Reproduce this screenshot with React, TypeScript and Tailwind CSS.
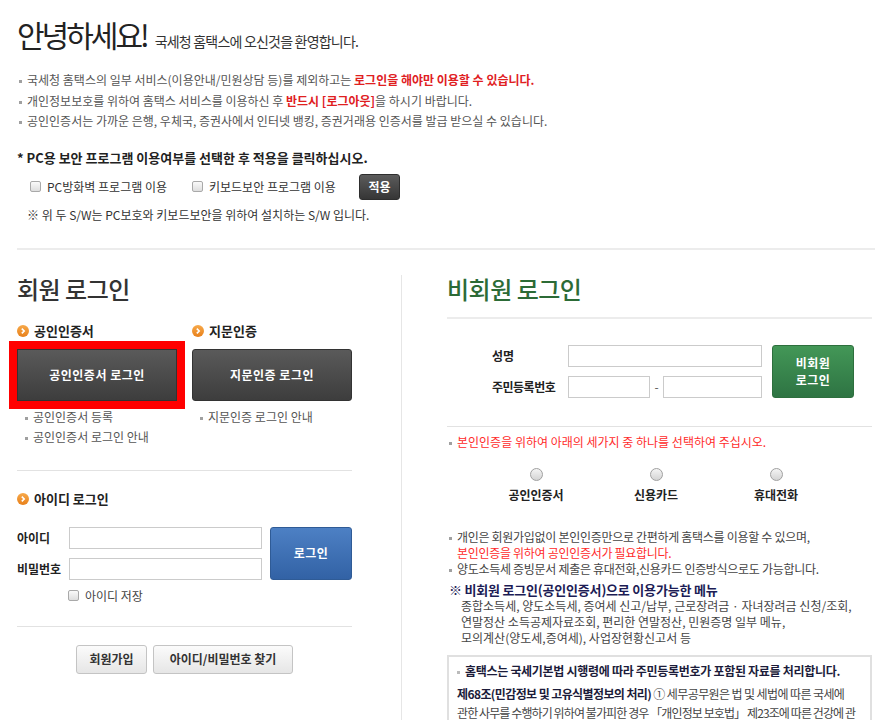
import React from 'react';

const font = { fontFamily: '"Noto Sans CJK KR", "Noto Sans", sans-serif' };

function Dot({ className = '' }: { className?: string }) {
  return <span className={`inline-block w-[3px] h-[3px] bg-[#a0a0a0] align-middle mr-[5px] ${className}`} />;
}

function Check({ className = '' }: { className?: string }) {
  return (
    <span
      className={`inline-block w-[11px] h-[11px] rounded-[2px] border border-[#a9a9a9] bg-gradient-to-b from-[#fafafa] to-[#dedede] ${className}`}
    />
  );
}

function Radio() {
  return (
    <span className="block w-[13px] h-[13px] rounded-full border border-[#a0a0a0] bg-gradient-to-b from-[#f4f4f4] to-[#d4d4d4]" />
  );
}

function OrangeIcon() {
  return (
    <svg width="12" height="12" viewBox="0 0 12 12" className="shrink-0">
      <defs>
        <linearGradient id="og" x1="0" y1="0" x2="0" y2="1">
          <stop offset="0" stopColor="#f7a94a" />
          <stop offset="1" stopColor="#e8801a" />
        </linearGradient>
      </defs>
      <circle cx="6" cy="6" r="6" fill="url(#og)" />
      <path d="M4.8 3.6 L7.2 6 L4.8 8.4" stroke="#fff" strokeWidth="1.6" fill="none" />
    </svg>
  );
}

function SectionHead({ children }: { children: React.ReactNode }) {
  return (
    <div className="flex items-center gap-[5px] h-[16px] text-[13px] font-bold text-[#222]">
      <OrangeIcon />
      <span>{children}</span>
    </div>
  );
}

function Input({ w }: { w: string }) {
  return <div className={`${w} h-[22px] border border-[#cbcbcb] bg-white`} />;
}

export default function App() {
  return (
    <div className="w-[896px] h-[720px] overflow-hidden bg-white text-[#555]" style={font}>
      {/* 상단 안내 */}
      <div className="px-[17px] pt-[16px]">
        <div className="flex items-baseline">
          <h1 className="text-[30px] leading-[36px] tracking-[-3px] text-[#222]">안녕하세요!</h1>
          <span className="ml-[8px] text-[14px] text-[#333] tracking-[-0.8px]">국세청 홈택스에 오신것을 환영합니다.</span>
        </div>
        <ul className="mt-[18px] text-[12px] leading-[20.5px]">
          <li>
            <Dot className="ml-[2px]" />
            국세청 홈택스의 일부 서비스(이용안내/민원상담 등)를 제외하고는{' '}
            <b className="text-[#e0201f]">로그인을 해야만 이용할 수 있습니다.</b>
          </li>
          <li>
            <Dot className="ml-[2px]" />
            개인정보보호를 위하여 홈택스 서비스를 이용하신 후 <b className="text-[#e0201f]">반드시 [로그아웃]</b>을 하시기 바랍니다.
          </li>
          <li>
            <Dot className="ml-[2px]" />
            공인인증서는 가까운 은행, 우체국, 증권사에서 인터넷 뱅킹, 증권거래용 인증서를 발급 받으실 수 있습니다.
          </li>
        </ul>
        <div className="mt-[16px] text-[13px] leading-[20px] font-bold text-[#222]">
          * PC용 보안 프로그램 이용여부를 선택한 후 적용을 클릭하십시오.
        </div>
        <div className="mt-[6px] h-[26px] flex items-center pl-[13px] text-[12px] text-[#333]">
          <label className="w-[162px] flex items-center gap-[6px]">
            <Check />
            PC방화벽 프로그램 이용
          </label>
          <label className="w-[167px] flex items-center gap-[6px]">
            <Check />
            키보드보안 프로그램 이용
          </label>
          <button className="w-[41px] h-[26px] rounded-[3px] border border-[#2e2e2e] bg-gradient-to-b from-[#5c5c5c] to-[#363636] text-white text-[12px] font-bold">
            적용
          </button>
        </div>
        <div className="mt-[5px] pl-[10px] text-[12px] leading-[20px] text-[#333]">
          ※ 위 두 S/W는 PC보호와 키보드보안을 위하여 설치하는 S/W 입니다.
        </div>
        <div className="mt-[23px] w-[858px] h-[2px] bg-[#ececec]" />
      </div>

      {/* 로그인 영역 */}
      <div className="flex pl-[17px] mt-[25px]">
        {/* 회원 로그인 */}
        <div className="w-[385px] h-[450px] border-r border-[#e6e6e6]">
          <h2 className="text-[24px] leading-[28px] font-medium text-[#333] tracking-[-0.5px]">회원 로그인</h2>
          <div className="mt-[20px] flex gap-[15px]">
            <div className="w-[160px]">
              <SectionHead>공인인증서</SectionHead>
              <button className="mt-[10px] w-[160px] h-[52px] border border-[#333] bg-gradient-to-b from-[#5a5a5a] to-[#3d3d3d] text-white text-[12px] font-bold tracking-[0.5px] outline-[8px] outline-solid outline-[#ff0000]">
                공인인증서 로그인
              </button>
            </div>
            <div className="w-[160px]">
              <SectionHead>지문인증</SectionHead>
              <button className="mt-[10px] w-[160px] h-[52px] rounded-[3px] border border-[#333] bg-gradient-to-b from-[#5a5a5a] to-[#3d3d3d] text-white text-[12px] font-bold tracking-[0.5px]">
                지문인증 로그인
              </button>
            </div>
          </div>
          <div className="mt-[6px] flex gap-[15px] text-[12px] leading-[20px] text-[#555]">
            <ul className="w-[160px] pl-[8px]">
              <li><Dot />공인인증서 등록</li>
              <li><Dot />공인인증서 로그인 안내</li>
            </ul>
            <ul className="w-[160px] pl-[8px]">
              <li><Dot />지문인증 로그인 안내</li>
            </ul>
          </div>
          <div className="mt-[23px] w-[335px] h-px bg-[#e2e2e2]" />
          <div className="mt-[20px]">
            <SectionHead>아이디 로그인</SectionHead>
          </div>
          <div className="mt-[20px] flex">
            <div className="flex flex-col gap-[9px]">
              <div className="flex items-center">
                <span className="w-[52px] text-[12px] font-bold text-[#222]">아이디</span>
                <Input w="w-[193px]" />
              </div>
              <div className="flex items-center">
                <span className="w-[52px] text-[12px] font-bold text-[#222]">비밀번호</span>
                <Input w="w-[193px]" />
              </div>
            </div>
            <button className="ml-[8px] w-[82px] h-[53px] rounded-[3px] border border-[#2f5b96] bg-gradient-to-b from-[#4d80c4] to-[#3262a5] text-white text-[12px] font-bold tracking-[0.5px]">
              로그인
            </button>
          </div>
          <label className="mt-[8px] ml-[51px] h-[16px] flex items-center gap-[6px] text-[12px] text-[#444]">
            <Check />
            아이디 저장
          </label>
          <div className="mt-[22px] w-[335px] h-px bg-[#e2e2e2]" />
          <div className="mt-[18px] w-[335px] flex justify-center gap-[6px]">
            <button className="w-[71px] h-[29px] rounded-[3px] border border-[#c4c4c4] bg-gradient-to-b from-[#fbfbfb] to-[#e6e6e6] text-[12px] font-bold text-[#333]">
              회원가입
            </button>
            <button className="w-[140px] h-[29px] rounded-[3px] border border-[#c4c4c4] bg-gradient-to-b from-[#fbfbfb] to-[#e6e6e6] text-[12px] font-bold text-[#333]">
              아이디/비밀번호 찾기
            </button>
          </div>
        </div>

        {/* 비회원 로그인 */}
        <div className="pl-[45px] w-[470px]">
          <h2 className="text-[24px] leading-[28px] font-medium text-[#2c6b36] tracking-[-0.5px]">비회원 로그인</h2>
          <div className="mt-[14px] w-[425px] h-[2px] bg-[#ececec]" />
          <div className="mt-[26px] pl-[45px] flex">
            <div className="flex flex-col gap-[9px]">
              <div className="flex items-center">
                <span className="w-[76px] text-[12px] font-bold text-[#222]">성명</span>
                <Input w="w-[194px]" />
              </div>
              <div className="flex items-center">
                <span className="w-[76px] text-[12px] font-bold text-[#222] tracking-[-0.5px]">주민등록번호</span>
                <Input w="w-[82px]" />
                <span className="w-[13px] text-center text-[12px] text-[#555]">-</span>
                <Input w="w-[99px]" />
              </div>
            </div>
            <button className="ml-[10px] w-[82px] h-[53px] rounded-[3px] border border-[#2d6f3d] bg-gradient-to-b from-[#439757] to-[#2e7443] text-white text-[12px] leading-[17px] font-bold tracking-[0.5px]">
              비회원
              <br />
              로그인
            </button>
          </div>
          <div className="mt-[28px] w-[425px] h-px bg-[#e2e2e2]" />
          <div className="mt-[7px] pl-[2px] text-[12px] leading-[16px] text-[#ff2b2b]">
            <Dot />
            본인인증을 위하여 아래의 세가지 중 하나를 선택하여 주십시오.
          </div>
          <div className="mt-[18px] ml-[29px] flex">
            {['공인인증서', '신용카드', '휴대전화'].map((t) => (
              <div key={t} className="w-[120px] flex flex-col items-center">
                <Radio />
                <span className="mt-[6px] text-[12px] leading-[16px] font-bold text-[#222]">{t}</span>
              </div>
            ))}
          </div>
          <div className="mt-[26px] pl-[2px] text-[12px] leading-[16px] text-[#444] tracking-[-0.3px]">
            <div><Dot />개인은 회원가입없이 본인인증만으로 간편하게 홈택스를 이용할 수 있으며,</div>
            <div className="pl-[8px] text-[#ff2b2b]">본인인증을 위하여 공인인증서가 필요합니다.</div>
            <div><Dot />양도소득세 증빙문서 제출은 휴대전화,신용카드 인증방식으로도 가능합니다.</div>
          </div>
          <div className="mt-[5px] pl-[2px] text-[13px] leading-[16px] font-bold text-[#1c1c55] tracking-[-0.2px]">
            ※ 비회원 로그인(공인인증서)으로 이용가능한 메뉴
          </div>
          <div className="pl-[14px] text-[12px] leading-[16px] text-[#444]">
            <div>종합소득세, 양도소득세, 증여세 신고/납부, 근로장려금 · 자녀장려금 신청/조회,</div>
            <div>연말정산 소득공제자료조회, 편리한 연말정산, 민원증명 일부 메뉴,</div>
            <div>모의계산(양도세,증여세), 사업장현황신고서 등</div>
          </div>
          <div className="mt-[9px] w-[425px] h-[80px] border-2 border-[#e0e0e0] px-[8px] pt-[6px] tracking-[-0.3px]">
            <div className="text-[12px] leading-[16px] font-bold text-[#1c1c3a]">
              <Dot className="bg-[#bbb]" />
              홈택스는 국세기본법 시행령에 따라 주민등록번호가 포함된 자료를 처리합니다.
            </div>
            <div className="mt-[5px] text-[12px] leading-[19px] text-[#444] break-all tracking-[-0.6px]">
              <b className="text-[#1c1c3a]">제68조(민감정보 및 고유식별정보의 처리)</b> ① 세무공무원은 법 및 세법에 따른 국세에
              <br />
              <span className="tracking-[-0.9px]">
                관한 사무를 수행하기 위하여 불가피한 경우 「개인정보 보호법」 제23조에 따른 건강에 관한 정보를 처리할 수 있다.
              </span>
            </div>
          </div>
        </div>
      </div>
    </div>
  );
}
